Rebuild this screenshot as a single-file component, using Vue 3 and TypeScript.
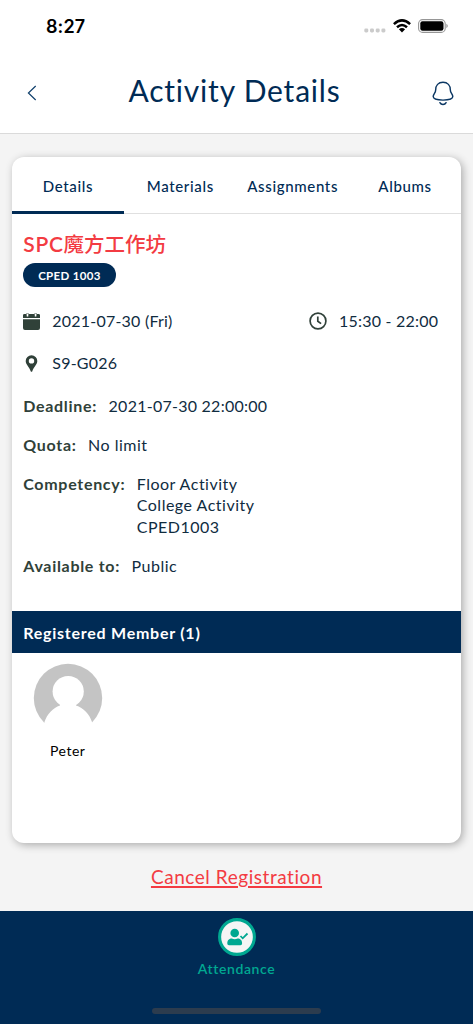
<script setup lang="ts">
import { ref } from 'vue'

interface Tab { key: string; label: string }
interface Field { key: string; label: string; values: string[] }

const tabs: Tab[] = [
  { key: 'details', label: 'Details' },
  { key: 'materials', label: 'Materials' },
  { key: 'assignments', label: 'Assignments' },
  { key: 'albums', label: 'Albums' },
]
const activeTab = ref<string>('details')

const fields: Field[] = [
  { key: 'deadline', label: 'Deadline:', values: ['2021-07-30 22:00:00'] },
  { key: 'quota', label: 'Quota:', values: ['No limit'] },
  { key: 'competency', label: 'Competency:', values: ['Floor Activity', 'College Activity', 'CPED1003'] },
  { key: 'available', label: 'Available to:', values: ['Public'] },
]
const members: string[] = ['Peter']
</script>

<template>
  <div class="screen">
    <div class="status">
      <span class="time">8:27</span>
      <div class="status-icons">
        <svg class="dots" width="22" height="5" viewBox="0 0 22 5"><g fill="#cbcbcb"><rect x="0.3" y="0.5" width="4" height="4" rx="1.4" /><rect x="6" y="0.5" width="4" height="4" rx="1.4" /><rect x="11.7" y="0.5" width="4" height="4" rx="1.4" /><rect x="17.4" y="0.5" width="4" height="4" rx="1.4" /></g></svg>
        <svg class="wifi" width="18" height="14" viewBox="0 0 18 14"><g fill="none" stroke="#000" stroke-width="2.5"><path d="M0.9 5.2Q9 -2.4 17.1 5.2" /><path d="M4 8.3Q9 3.8 14 8.3" /></g><path d="M5.9 10.3Q9 7.9 12.1 10.3L9 13.4Z" /></svg>
        <svg class="battery" width="30" height="14" viewBox="0 0 30 14"><rect x="0.6" y="0.6" width="26.6" height="12.8" rx="4" fill="#fff" stroke="#969696" stroke-width="1.1" /><rect x="2.3" y="2.2" width="23.2" height="9.6" rx="2.2" /><path d="M28.4 4.8Q31.2 7 28.4 9.2Z" fill="#969696" /></svg>
      </div>
    </div>
    <header class="header">
      <svg class="back" width="10" height="16" viewBox="0 0 10 16"><path d="M8.7 1L1.4 8L8.7 15" fill="none" stroke="#10406c" stroke-width="1.2" /></svg>
      <h1>Activity Details</h1>
      <svg class="bell" width="22" height="25" viewBox="0 0 22 25"><g fill="none" stroke="#0b3763" stroke-width="1.45" stroke-linecap="round" stroke-linejoin="round"><path d="M11 1.2C6.3 1.2 3.7 4.6 3.7 8.7C3.7 12.1 1.2 12.9 1.2 15.6C1.2 18.6 5.2 19.1 11 19.1S20.8 18.6 20.8 15.6C20.8 12.9 18.3 12.1 18.3 8.7C18.3 4.6 15.7 1.2 11 1.2Z" /><path d="M7.9 21.7C9.2 24.1 12.8 24.1 14.1 21.7" /></g></svg>
    </header>

    <main class="content">
      <section class="card">
        <nav class="tabs">
          <button v-for="tab in tabs" :key="tab.key" :class="['tab', tab.key, { active: tab.key === activeTab }]" @click="activeTab = tab.key"><span>{{ tab.label }}</span></button>
        </nav>
        <div class="body">
          <h2><span class="latin">SPC</span>魔方工作坊</h2>
          <div class="badge"><span>CPED 1003</span></div>
          <div class="when">
            <div class="meta">
              <svg width="17" height="17" viewBox="0 0 17 17"><path fill="#304139" d="M0 2.2Q0 1 1.4 1H15.6Q17 1 17 2.2V5H0ZM0 6.2H17V15Q17 17 15 17H2Q0 17 0 15Z" /><g fill="#fff" stroke="#304139" stroke-width=".6"><rect x="3.4" y="0.2" width="2.2" height="3.7" rx="1.1" /><rect x="11.5" y="0.2" width="2.2" height="3.7" rx="1.1" /></g></svg>
              <span class="date">2021-07-30 (Fri)</span>
            </div>
            <div class="meta clock">
              <svg width="18" height="18" viewBox="0 0 18 18"><g fill="none" stroke="#304139" stroke-width="1.7"><circle cx="9" cy="9" r="7.9" /><path d="M8.8 4.6V9.2L12.1 11.6" /></g></svg>
              <span class="hours">15:30 - 22:00</span>
            </div>
          </div>
          <div class="meta place">
            <svg width="17" height="17" viewBox="0 0 17 17"><path fill="#304139" fill-rule="evenodd" d="M8.5 0.2A5.8 5.8 0 0 0 2.7 6C2.7 9.4 6.2 11.7 7.8 16.4Q8.5 17.3 9.2 16.4C10.8 11.7 14.3 9.4 14.3 6A5.8 5.8 0 0 0 8.5 .2ZM8.5 3.2A2.7 2.7 0 1 1 8.5 8.6A2.7 2.7 0 0 1 8.5 3.2Z" /></svg>
            <span class="room">S9-G026</span>
          </div>
          <div v-for="f in fields" :key="f.key" :class="['field', f.key]">
            <strong>{{ f.label }}</strong>
            <div class="values"><div v-for="v in f.values" :key="v"><span>{{ v }}</span></div></div>
          </div>
        </div>
        <div class="band"><span>Registered Member ({{ members.length }})</span></div>
        <div class="members">
          <div v-for="m in members" :key="m" class="member">
            <svg width="70" height="70" viewBox="0 0 70 70"><circle cx="35" cy="35" r="34.2" fill="#c4c4c4" /><circle cx="35.2" cy="28.5" r="15.6" fill="#fff" /><path fill="#fff" d="M27 40Q35 44 43 40V42.5C50.5 45 56.5 51 59.2 59.5L59 71H11L11.3 59.5C14 51 20 45 27 42.5Z" /></svg>
            <span>{{ m }}</span>
          </div>
        </div>
      </section>
      <a class="cancel"><span>Cancel Registration</span></a>
    </main>

    <footer class="footer">
      <svg width="38" height="38" viewBox="0 0 38 38"><circle cx="19" cy="19" r="17.4" fill="#f5f5f5" stroke="#00a891" stroke-width="3.1" /><g fill="#00a891"><circle cx="16.7" cy="15" r="4.3" /><path d="M9.3 25.5C9.3 21.9 11.3 20.5 13.8 20.5Q16.7 21.8 19.6 20.5C22.2 20.5 24.1 21.9 24.1 25.5Q24.1 27.3 22.5 27.3H10.9Q9.3 27.3 9.3 25.5Z" /></g><path d="M22.5 18L24.7 20.3L29.5 15.5" fill="none" stroke="#00a891" stroke-width="1.8" /></svg>
      <span class="attendance">Attendance</span>
      <div class="home-bar"></div>
    </footer>
  </div>
</template>

<style>
body { margin: 0; }
</style>

<style scoped>
.screen { width: 473px; height: 1024px; display: flex; flex-direction: column; overflow: hidden; background: #f4f4f4; color: #102c3f; font-family: Lato, "Noto Sans CJK TC", sans-serif; white-space: nowrap; box-sizing: border-box; }
.status { height: 52px; flex: none; display: flex; justify-content: space-between; padding: 0 25px 0 46px; background: #fff; }
.time { color: #000; font: 600 18px/54px Inter, sans-serif; letter-spacing: .1px; }
.status-icons { display: flex; padding-top: 19px; align-items: flex-start; }
.dots { margin: 9px 7px 0 0; }
.battery { margin-left: 7px; }
.header { height: 81px; flex: none; display: grid; grid-template-columns: 60px 1fr 60px; align-items: center; background: #fff; border-bottom: 1px solid #dadada; }
.back { margin-left: 27px; margin-top: 1px; }
.bell { justify-self: end; margin-right: 19px; margin-top: 1px; }
h1 { margin: 0 0 5px -4px; text-align: center; font-size: 30px; line-height: 40px; font-weight: 400; color: #002b55; letter-spacing: .8px; }
.content { height: 777px; flex: none; display: flex; flex-direction: column; align-items: center; padding: 23px 12px 0; box-sizing: border-box; }
.card { width: 449.5px; height: 686px; flex: none; overflow: hidden; border-radius: 12px; background: #fff; box-shadow: 2px 2px 8px rgba(0,0,0,.3); }
.tabs { height: 57px; display: grid; grid-template-columns: repeat(4, 1fr); box-sizing: border-box; border-bottom: 1px solid #e0e0e0; }
.tab { height: 57px; padding: 3px 0 0; border: 0; border-bottom: 3px solid transparent; background: none; color: #002b55; font: 500 15px/20px Lato, sans-serif; letter-spacing: .65px; }
.tab.active { border-bottom-color: #002b55; }
.body { height: 397px; padding: 16px 23px 0 11.5px; box-sizing: border-box; }
h2 { margin: 0; height: 28px; font: 500 20.5px/27px "Noto Sans CJK TC", sans-serif; color: #f33b42; }
.latin { font: 600 21px/27px Lato, sans-serif; letter-spacing: .7px; }
.badge { margin-top: 5px; width: 92.5px; height: 24px; line-height: 25px; border-radius: 13px; background: #002b55; color: #fff; font-size: 11.5px; font-weight: 700; text-align: center; letter-spacing: .35px; }
.when { display: flex; justify-content: space-between; margin-top: 22px; }
.meta { height: 24px; display: flex; align-items: center; gap: 12px; font-size: 16px; line-height: 24px; letter-spacing: .22px; }
.place { margin-top: 18px; }
.field { display: flex; gap: 11.5px; margin-top: 17.25px; font-size: 16px; line-height: 21.6px; letter-spacing: .5px; }
.deadline { margin-top: 20px; }
.deadline .values { letter-spacing: .25px; }
.field strong { font-weight: 700; color: #304139; letter-spacing: .7px; }
.band { height: 42px; line-height: 44px; padding-left: 11.5px; background: #002b55; color: #fff; font-size: 16px; font-weight: 700; letter-spacing: .75px; }
.members { padding: 10px 21px; }
.member { width: 70px; display: flex; flex-direction: column; align-items: center; color: #000; font-size: 14px; line-height: 18px; letter-spacing: .5px; }
.member span { margin-top: 9px; }
.cancel { margin-top: 20px; color: #f33b42; font-size: 19px; line-height: 28px; letter-spacing: .55px; text-decoration: underline; text-decoration-thickness: 1.5px; text-underline-offset: 2px; }
.footer { flex: 1; display: flex; flex-direction: column; align-items: center; padding-top: 7px; background: #002b55; box-sizing: border-box; }
.attendance { margin-top: 3px; color: #00a891; font-size: 14px; font-weight: 600; line-height: 20px; letter-spacing: .6px; }
.home-bar { width: 169px; height: 6px; margin-top: 29px; border-radius: 3px; background: #2c3c4e; }
</style>
